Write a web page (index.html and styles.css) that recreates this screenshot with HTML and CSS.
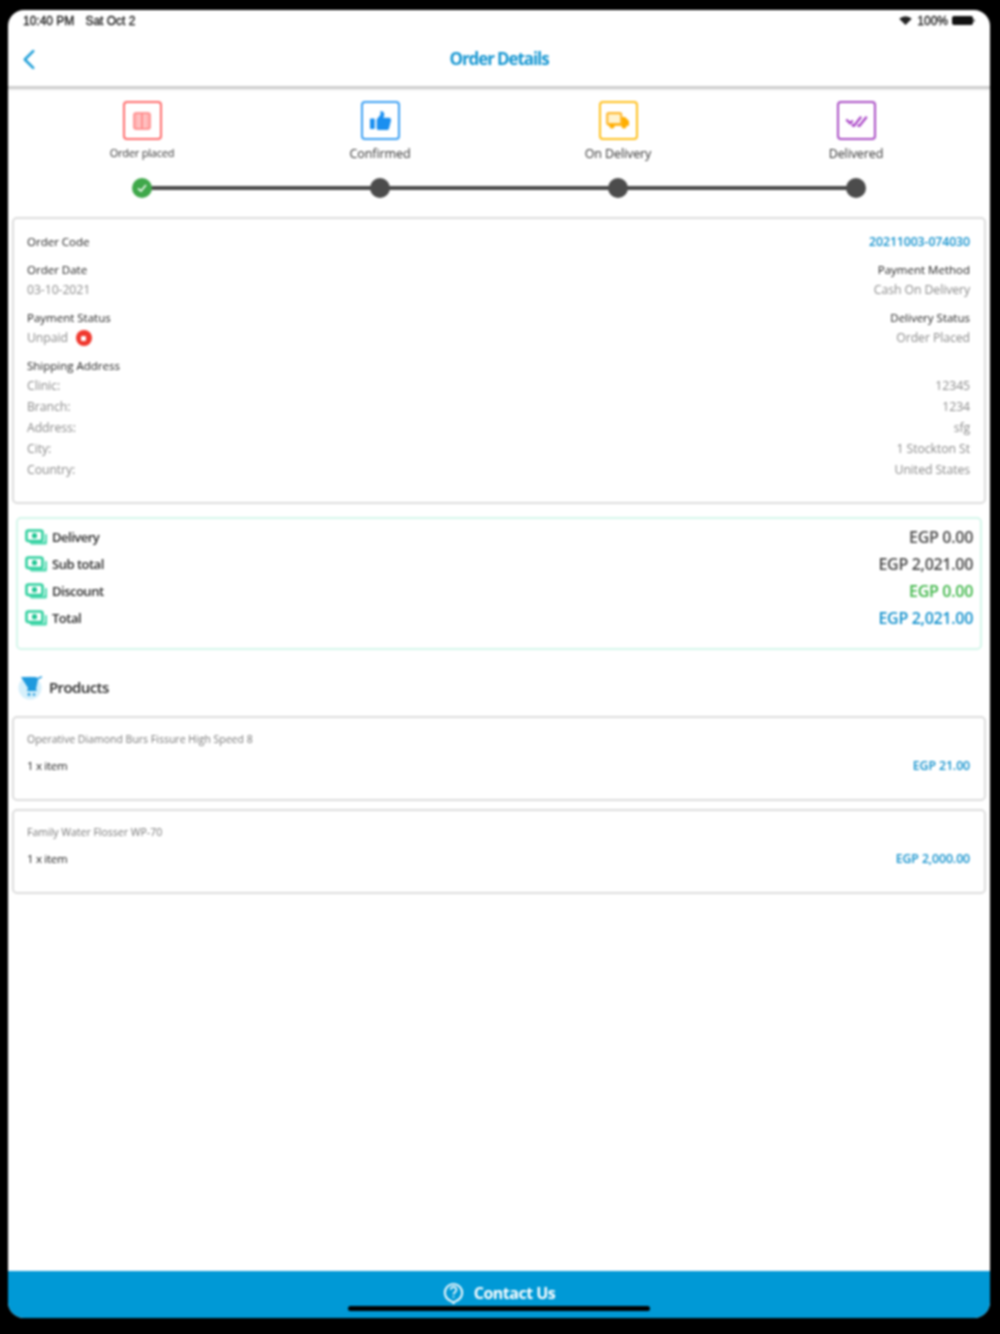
FILE: index.html
```html
<!DOCTYPE html>
<html lang="en">
<head>
<meta charset="utf-8">
<title>Order Details</title>
<link rel="stylesheet" href="styles.css">
</head>
<body>
<div class="device">
  <div class="status">
    <div class="status-left"><span>10:40 PM</span><span>Sat Oct 2</span></div>
    <div class="status-right">
      <svg class="wifi" viewBox="0 0 14 10"><path d="M7 10 0 3a10 10 0 0 1 14 0z" fill="#222"/></svg>
      <span>100%</span>
      <span class="battery"></span>
    </div>
  </div>
  <header class="header">
    <svg class="back" viewBox="0 0 12 20"><path d="M10 2 2 10l8 8" fill="none" stroke="#1f9fd8" stroke-width="2.4" stroke-linecap="round" stroke-linejoin="round"/></svg>
    <h1 class="title">Order Details</h1>
  </header>
  <section class="steps">
    <div class="step">
      <div class="step-box box-red">
        <svg viewBox="0 0 18 18" width="18" height="18"><rect x="1" y="1" width="16" height="16" rx="2" fill="#ffb4b4" stroke="#ff8080" stroke-width="1.500"/><path d="M9 2v14" stroke="#ff8080" stroke-width="1.200"/><path d="M6 2v14M12 2v14" stroke="#ffe2e2" stroke-width=".8"/></svg>
      </div>
      <div class="step-label small">Order placed</div>
    </div>
    <div class="step">
      <div class="step-box box-blue">
        <svg viewBox="0 0 24 22" width="23" height="21"><rect x="1" y="9" width="5" height="11" rx="1" fill="#1a8ff0"/><path d="M8 10 12 5V1c2 0 4 1 4 4l-1 3h6c2 0 2 2 2 3l-2 8c-.3 1-1 2-2 2H10c-1 0-2-1-2-2z" fill="#1a8ff0"/></svg>
      </div>
      <div class="step-label">Confirmed</div>
    </div>
    <div class="step">
      <div class="step-box box-yellow">
        <svg viewBox="0 0 24 17" width="24" height="17"><rect x="1.200" y="1.200" width="14" height="11" rx="1.500" fill="#fff3cf" stroke="#ffb92e" stroke-width="2.200"/><path d="M16 5h3l4 4v4H16z" fill="#ffae00"/><path d="M2 13h21" stroke="#ffae00" stroke-width="1.500"/><circle cx="6" cy="14" r="2.500" fill="#ffae00"/><circle cx="18" cy="14" r="2.500" fill="#ffae00"/></svg>
      </div>
      <div class="step-label">On Delivery</div>
    </div>
    <div class="step">
      <div class="step-box box-purple">
        <svg viewBox="0 0 24 14" width="23" height="13"><path d="M1 6l4 4 3-3M7 11l2 2L17 3M13 12l2 1 8-10" fill="none" stroke="#a53cc4" stroke-width="2.300"/></svg>
      </div>
      <div class="step-label">Delivered</div>
    </div>
  </section>
  <div class="track">
    <div class="track-line"></div>
    <div class="dot dot-done"><svg viewBox="0 0 20 20" width="20" height="20"><path d="M6 10.500 9 13l5-6" fill="none" stroke="#e9f7ea" stroke-width="1.800"/></svg></div>
    <div class="dot"></div>
    <div class="dot"></div>
    <div class="dot"></div>
  </div>

  <section class="card info">
    <div class="row row-first"><span class="lbl">Order Code</span><span class="code">20211003-074030</span></div>
    <div class="row row-lbl"><span class="lbl">Order Date</span><span class="lbl">Payment Method</span></div>
    <div class="row row-val"><span>03-10-2021</span><span>Cash On Delivery</span></div>
    <div class="row row-lbl"><span class="lbl">Payment Status</span><span class="lbl">Delivery Status</span></div>
    <div class="row row-val"><span class="unpaid">Unpaid <span class="x"></span></span><span>Order Placed</span></div>
    <div class="row row-lbl"><span class="lbl">Shipping Address</span></div>
    <div class="row row-val"><span>Clinic:</span><span>12345</span></div>
    <div class="row row-addr"><span>Branch:</span><span>1234</span></div>
    <div class="row row-addr"><span>Address:</span><span>sfg</span></div>
    <div class="row row-addr"><span>City:</span><span>1 Stockton St</span></div>
    <div class="row row-addr"><span>Country:</span><span>United States</span></div>
  </section>

  <section class="summary">
    <div class="sum-row"><span class="sum-name"><svg class="cash" viewBox="0 0 23 16"><path d="M4 13h14a2 2 0 0 0 2-2V5h1a1 1 0 0 1 1 1v8a1.500 1.500 0 0 1-1.500 1.500H6z" fill="#4fdab0"/><rect x="1.500" y="1.500" width="16" height="10.500" rx="2" fill="#fff" stroke="#2fd09e" stroke-width="2.600"/><circle cx="9.500" cy="6.700" r="2.600" fill="#1fc592"/></svg>Delivery</span><span class="amt">EGP 0.00</span></div>
    <div class="sum-row"><span class="sum-name"><svg class="cash" viewBox="0 0 23 16"><path d="M4 13h14a2 2 0 0 0 2-2V5h1a1 1 0 0 1 1 1v8a1.500 1.500 0 0 1-1.500 1.500H6z" fill="#4fdab0"/><rect x="1.500" y="1.500" width="16" height="10.500" rx="2" fill="#fff" stroke="#2fd09e" stroke-width="2.600"/><circle cx="9.500" cy="6.700" r="2.600" fill="#1fc592"/></svg>Sub total</span><span class="amt">EGP 2,021.00</span></div>
    <div class="sum-row"><span class="sum-name"><svg class="cash" viewBox="0 0 23 16"><path d="M4 13h14a2 2 0 0 0 2-2V5h1a1 1 0 0 1 1 1v8a1.500 1.500 0 0 1-1.500 1.500H6z" fill="#4fdab0"/><rect x="1.500" y="1.500" width="16" height="10.500" rx="2" fill="#fff" stroke="#2fd09e" stroke-width="2.600"/><circle cx="9.500" cy="6.700" r="2.600" fill="#1fc592"/></svg>Discount</span><span class="amt amt-green">EGP 0.00</span></div>
    <div class="sum-row"><span class="sum-name"><svg class="cash" viewBox="0 0 23 16"><path d="M4 13h14a2 2 0 0 0 2-2V5h1a1 1 0 0 1 1 1v8a1.500 1.500 0 0 1-1.500 1.500H6z" fill="#4fdab0"/><rect x="1.500" y="1.500" width="16" height="10.500" rx="2" fill="#fff" stroke="#2fd09e" stroke-width="2.600"/><circle cx="9.500" cy="6.700" r="2.600" fill="#1fc592"/></svg>Total</span><span class="amt amt-blue">EGP 2,021.00</span></div>
  </section>

  <div class="products-head">
    <svg class="cart" viewBox="0 0 26 26"><circle cx="12" cy="14" r="11.500" fill="#d6f0fb"/><path d="M3 3h15l1 1 5-2v1.500l-4 2-2 9.500 1 2H9l1-3z" fill="#1e9ade"/><circle cx="11" cy="20.500" r="1.400" fill="#1e9ade"/><circle cx="16" cy="20.500" r="1.300" fill="#1e9ade"/></svg>
    <span>Products</span>
  </div>

  <section class="card product">
    <div class="p-name">Operative Diamond Burs Fissure High Speed 8</div>
    <div class="p-row"><span class="qty">1 x item</span><span class="code">EGP 21.00</span></div>
  </section>
  <section class="card product">
    <div class="p-name">Family Water Flosser WP-70</div>
    <div class="p-row"><span class="qty">1 x item</span><span class="code">EGP 2,000.00</span></div>
  </section>

  <footer class="contact">
    <div class="contact-in">
      <svg class="help" viewBox="0 0 22 24"><path d="M11 22c-1-1-2-2-3-2.300A9 9 0 1 1 14 19.700c-1 .3-2 1.300-3 2.300z" fill="none" stroke="#fff" stroke-width="2"/><path d="M8 8a3 3 0 1 1 4.500 2.700c-1 .6-1.500 1-1.500 2.300" fill="none" stroke="#fff" stroke-width="1.800"/><circle cx="11" cy="15.500" r="1" fill="#fff"/></svg>
      <span>Contact Us</span>
    </div>
    <div class="home"></div>
  </footer>
</div>
</body>
</html>
```
FILE: styles.css
```css
* { box-sizing: border-box; }
html, body { margin: 0; padding: 0; height: 1334px; background: #000; overflow: hidden; }
body { padding: 10px 10px 16px 8px; font-family: "Open Sans", "Noto Sans", sans-serif; color: #555; }
.device {
  position: relative;
  width: 982px;
  height: 1308px;
  background: #fff;
  border-radius: 16px;
  overflow: hidden;
  display: flex;
  flex-direction: column;
  filter: blur(0.8px);
}
.status { height: 22px; padding: 0 15px 1px 15px; display: flex; justify-content: space-between; align-items: center; font-family: "Liberation Sans", sans-serif; font-size: 12px; font-weight: 400; color: #111; -webkit-text-stroke: 0.3px #111; }
.status-left { display: flex; gap: 11px; }
.status-right { display: flex; align-items: center; gap: 4px; }
.wifi { width: 13px; height: 9px; margin-right: 1px; }
.battery { width: 21px; height: 9px; background: #111; border-radius: 2px; position: relative; margin-right: 2px; }
.battery::after { content: ""; position: absolute; right: -2px; top: 3px; width: 2px; height: 3px; background: #888; }
.header { height: 57px; padding-bottom: 2px; border-bottom: 3px solid #cfcfcf; box-shadow: 0 1px 2px rgba(0,0,0,0.08); position: relative; display: flex; align-items: center; justify-content: center; }
.back { position: absolute; left: 14px; top: 17px; width: 14px; height: 21px; }
.title { margin: 0; font-size: 17px; font-weight: 700; color: #1797d2; letter-spacing: -1.100px; }
.steps { display: grid; grid-template-columns: repeat(4, 238px); padding: 12px 0 0 15px; height: 89px; }
.step { display: flex; flex-direction: column; align-items: center; }
.step-box { width: 39px; height: 39px; border: 2px solid; border-radius: 4px; display: flex; align-items: center; justify-content: center; }
.box-red { border-color: #ff6b6b; }
.box-blue { border-color: #3a9ff3; }
.box-yellow { border-color: #ffbf1a; }
.box-purple { border-color: #a94cc4; }
.step-label { margin-top: 5px; font-size: 12.500px; line-height: 18px; color: #333; letter-spacing: -0.1px; }
.step-label.small { font-size: 11px; margin-top: 4px; letter-spacing: -0.2px; }
.track { position: relative; margin-left: 124px; width: 734px; height: 20px; display: flex; justify-content: space-between; align-items: center; }
.track-line { position: absolute; left: 10px; right: 10px; top: 8px; height: 4px; background: #4a4a4a; }
.dot { position: relative; width: 20px; height: 20px; border-radius: 50%; background: #4c4c4c; }
.dot-done { background: #3fa84a; }
.dot-done svg { display: block; }
.card { margin: 0 4px; border: 2px solid #dcdcdc; border-radius: 5px; background: #fff; }
.info { margin-top: 19px; height: 287px; padding: 13px 14px 0 13px; }
.row { display: flex; justify-content: space-between; font-size: 12.300px; color: #8a8a8a; letter-spacing: -0.1px; }
.row-first { height: 20px; line-height: 20px; }
.row-lbl { margin-top: 8px; height: 20px; line-height: 20px; }
.row-val { height: 20px; line-height: 20px; }
.row-addr { margin-top: 1px; height: 20px; line-height: 20px; }
.lbl { color: #222; font-size: 11.500px; letter-spacing: 0; }
.code { color: #1090cc; font-size: 12.300px; font-weight: 600; letter-spacing: -0.1px; }
.unpaid { display: flex; align-items: center; gap: 8px; }
.x { width: 16px; height: 16px; border-radius: 50%; background: #f0392f; display: flex; align-items: center; justify-content: center; }
.x::after { content: ""; width: 5px; height: 5px; background: #fff; border-radius: 1px; }
.summary { margin: 13px 8px 0; height: 133px; border: 2px solid #d4f6ea; border-radius: 5px; padding: 4px 7px 0 7px; }
.sum-row { height: 27px; display: flex; align-items: center; justify-content: space-between; }
.sum-name { display: flex; align-items: center; gap: 4px; font-size: 13px; font-weight: 600; color: #2a2a2a; letter-spacing: -0.5px; }
.cash { width: 23px; height: 16px; position: relative; top: 0.5px; }
.amt { font-size: 16px; font-weight: 600; color: #484848; letter-spacing: -0.3px; }
.amt-green { color: #3cb546; }
.amt-blue { color: #1090cc; }
.products-head { height: 66px; padding: 8px 0 0 10px; display: flex; align-items: center; gap: 5px; font-size: 15px; font-weight: 600; color: #2a2a2a; letter-spacing: -0.6px; }
.cart { width: 26px; height: 26px; }
.product { height: 85px; padding: 12px 14px 0 13px; margin-bottom: 8px; }
.p-name { font-size: 10.500px; line-height: 18px; color: #777; letter-spacing: 0; }
.p-row { margin-top: 9px; display: flex; justify-content: space-between; line-height: 18px; font-size: 12px; }
.qty { color: #222; font-size: 11.500px; letter-spacing: -0.3px; }
.contact { margin-top: auto; height: 47px; background: #0099d6; position: relative; display: flex; justify-content: center; padding-top: 11px; }
.contact-in { display: flex; align-items: flex-start; gap: 10px; color: #fff; font-size: 16px; font-weight: 700; letter-spacing: -0.5px; line-height: 22px; }
.help { width: 21px; height: 23px; }
.home { position: absolute; left: 340px; bottom: 7px; width: 302px; height: 5px; background: #000; border-radius: 3px; }
```
